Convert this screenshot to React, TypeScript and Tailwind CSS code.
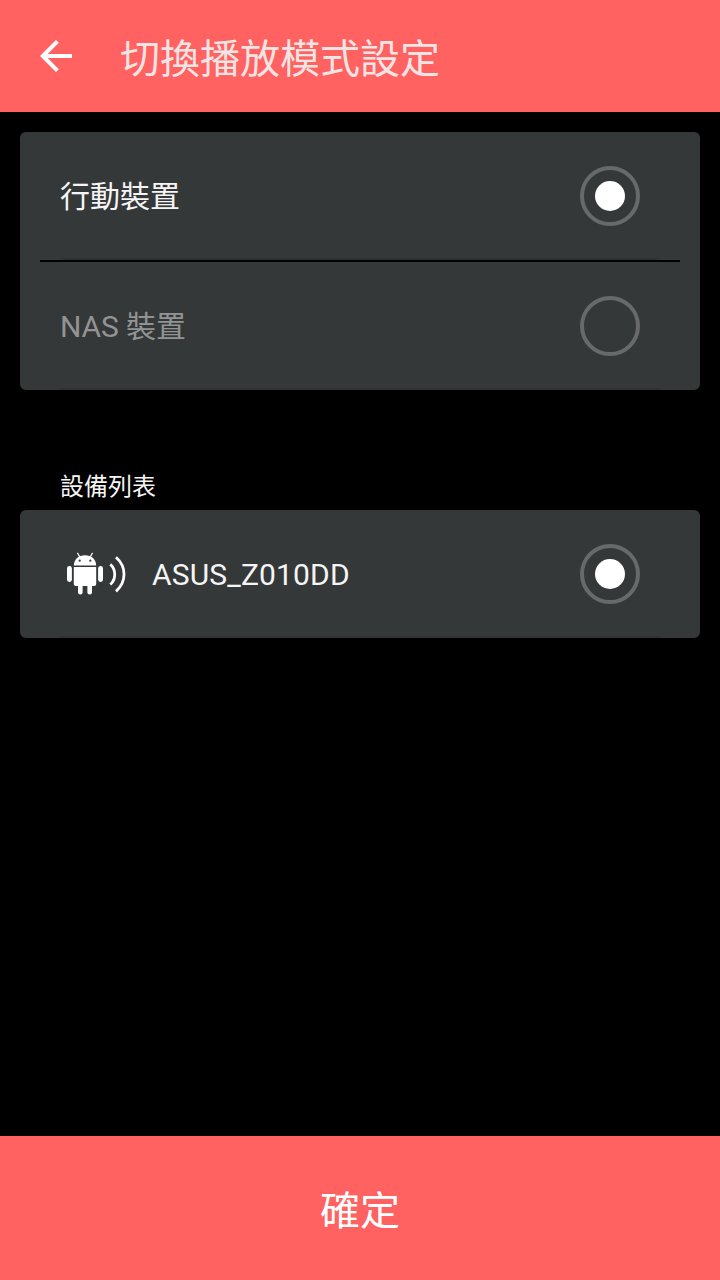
import type { ReactNode } from "react";

function BackArrow() {
  return (
    <svg width="32" height="32" viewBox="0 0 32 32" fill="none" stroke="#fff" strokeWidth="4">
      <path d="M32 16H4" />
      <path d="M17.4 1.4 2.8 16l14.6 14.6" />
    </svg>
  );
}

function AndroidCast() {
  return (
    <svg width="72" height="60" viewBox="0 0 72 60" fill="#fff">
      <path d="M13.8 21.4C14 15.2 18.6 11.2 25 11.2s11 4 11.2 10.2z" />
      <path d="m17.4 8.9 2.4 4M32.6 8.9l-2.4 4" stroke="#fff" strokeWidth="1.1" />
      <circle cx="19.7" cy="16.7" r="1.1" fill="#353839" />
      <circle cx="30.3" cy="16.7" r="1.1" fill="#353839" />
      <path d="M13.8 22.9h22.4v17.2a2 2 0 0 1-2 2H15.8a2 2 0 0 1-2-2z" />
      <rect x="7" y="22" width="4.9" height="16" rx="2.4" />
      <rect x="38.1" y="22" width="4.9" height="16" rx="2.4" />
      <rect x="18" y="36" width="4.6" height="14.5" rx="2.2" />
      <rect x="27.4" y="36" width="4.6" height="14.5" rx="2.2" />
      <path
        d="M50.3 20.3c5.9 5.4 5.9 14.8 0 20.2M56 13.3c10.7 9.5 10.7 24.6 0 34.1"
        fill="none"
        stroke="#fff"
        strokeWidth="2.8"
      />
    </svg>
  );
}

function Radio({ checked }: { checked?: boolean }) {
  return (
    <span className="flex size-[60px] items-center justify-center rounded-full border-4 border-[#686a6a]">
      {checked && <span className="size-[30px] rounded-full bg-white" />}
    </span>
  );
}

function Row({ checked, children }: { checked?: boolean; children: ReactNode }) {
  return (
    <div className="mx-10 h-32 border-b-2 border-[#303334]">
      <div className="flex h-32 items-center justify-between pr-5">
        <div className="flex items-center text-[30px] leading-10">{children}</div>
        <Radio checked={checked} />
      </div>
    </div>
  );
}

export default function App() {
  return (
    <div className="flex h-[1280px] w-[720px] flex-col bg-black font-[Roboto,'Noto_Sans_CJK_TC',sans-serif] text-[#f5f5f5]">
      <header className="flex h-28 items-center gap-12 bg-[#ff6260] px-10">
        <BackArrow />
        <h1 className="pt-2 text-[40px] leading-[56px] text-[#f1e4e4]">切換播放模式設定</h1>
      </header>

      <main className="flex-1 px-5 pt-5">
        <section className="rounded-md bg-[#353839]">
          <Row checked>
            <span className="pt-0.5">行動裝置</span>
          </Row>
          <div className="mx-5 h-0.5 bg-black" />
          <Row>
            <span className="pt-0.5 tracking-[-0.1px] text-[#929494]">NAS 裝置</span>
          </Row>
        </section>

        <h2 className="mt-[81px] px-10 text-2xl leading-8">設備列表</h2>

        <section className="mt-[7px] rounded-md bg-[#353839]">
          <Row checked>
            <AndroidCast />
            <span className="ml-5 pt-0.5 tracking-[0.15px]">ASUS_Z010DD</span>
          </Row>
        </section>
      </main>

      <button className="h-36 bg-[#ff6260] pt-2 text-[40px] text-white">確定</button>
    </div>
  );
}
